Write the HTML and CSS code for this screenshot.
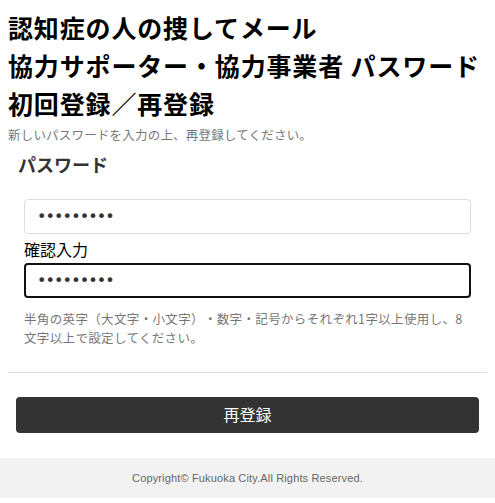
FILE: index.html
```html
<!DOCTYPE html>
<html lang="ja">
<head>
<meta charset="UTF-8" />
<meta name="viewport" content="width=device-width, initial-scale=1.0" />
<title>パスワード初回登録／再登録</title>
<link rel="stylesheet" href="styles.css">
</head>
<body>

<!-- ───── MAIN ───── -->
<div class="page">
  <h1 class="title">認知症の人の捜してメール<br>協力サポーター・協力事業者 パスワード<br>初回登録／再登録</h1>
  <p class="lead">新しいパスワードを入力の上、再登録してください。</p>

  <form class="form" onsubmit="return false">
    <div class="box">
      <div class="legend">パスワード</div>
      <input class="pw" type="password" value="aaaaaaaaa">
      <label class="sub" for="pw2">確認入力</label>
      <input class="pw focus" id="pw2" type="password" value="aaaaaaaaa">
      <p class="note">半角の英字（大文字・小文字）・数字・記号からそれぞれ1字以上使用し、8文字以上で設定してください。</p>
    </div>
    <hr class="line">
    <button class="submit" type="submit">再登録</button>
  </form>
</div>

<!-- ───── FOOTER ───── -->
<div class="footer">Copyright© Fukuoka City.All Rights Reserved.</div>

</body>
</html>
```

FILE: styles.css
```css
/* ───── RESET ───── */
*{box-sizing:border-box}
body{margin:0;background:#fff;color:#000;font-family:"Noto Sans CJK JP","Noto Sans",sans-serif;text-spacing-trim:space-all}

/* ───── HEADING ───── */
.page{padding:8px 8px 0}
.title{margin:0;font-size:25px;line-height:38px;font-weight:700;letter-spacing:.85px}
.lead{margin:4px 0 0;font-size:12.5px;line-height:18px;color:#777;letter-spacing:.2px}

/* ───── FORM ───── */
.box{margin:0 2px;padding:0 14px}
.legend{margin:6px 0 0 -6px;font-size:18px;line-height:28px;font-weight:700;color:#333}
.pw{
  display:block;width:100%;height:35px;margin:0;padding:0 12px;
  border:1px solid #ddd;border-radius:4px;background:#fff;
  color:#333;font-family:"DejaVu Sans",sans-serif;font-size:16px;letter-spacing:-.9px;outline:none
}
.box .legend + .pw{margin-top:21px}
.pw.focus{border:2px solid #111;padding:0 11px}
.sub{display:block;font-size:16px;line-height:28px;padding-top:1px;color:#000}
.note{margin:11px 0 0;font-size:12.5px;line-height:19px;color:#777;letter-spacing:.35px}

.line{margin:25px 0 24px;border:0;border-top:1px solid #ddd}
.submit{
  display:block;width:calc(100% - 16px);height:36px;margin:0 8px;padding:0 0 3px;
  border:0;border-radius:4px;background:#333;color:#fff;
  font-family:inherit;font-size:16px;cursor:pointer
}

/* ───── FOOTER ───── */
.footer{
  margin-top:25px;height:40px;line-height:40px;background:#f2f2f2;
  text-align:center;font-family:"Liberation Sans",sans-serif;font-size:11px;letter-spacing:.15px;color:#666
}
```
